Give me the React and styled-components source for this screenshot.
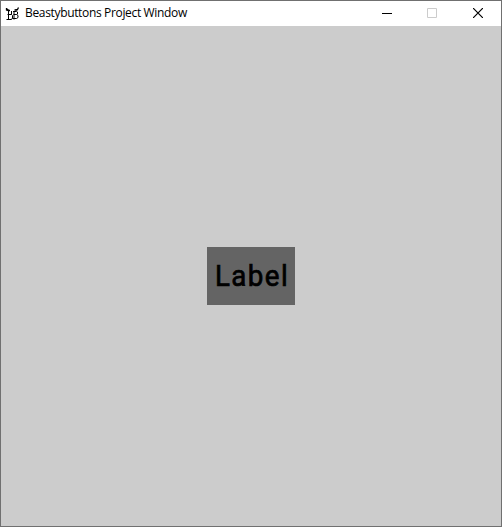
import React from "react";
import styled, { createGlobalStyle } from "styled-components";

const GlobalStyle = createGlobalStyle`
  * { box-sizing: border-box; }
  body { margin: 0; }
`;

const Window = styled.div`
  display: flex;
  flex-direction: column;
  width: 502px;
  height: 527px;
  border: 1px solid #707070;
  background: #cccccc;
  overflow: hidden;
`;

const TitleBar = styled.header`
  display: flex;
  align-items: flex-start;
  height: 25px;
  flex: none;
  padding-left: 4px;
  background: #ffffff;
`;

const AppIcon = styled.svg`
  width: 16px;
  height: 16px;
  flex: none;
  margin-top: 4px;
`;

const Title = styled.span`
  flex: 1;
  margin-left: 4px;
  font: 12px/24px "Open Sans", "Noto Sans", sans-serif;
  letter-spacing: -0.34px;
  color: #000000;
  white-space: nowrap;
`;

const ControlButton = styled.button`
  display: flex;
  align-items: center;
  justify-content: center;
  width: ${({ $wide }) => ($wide ? "47px" : "45px")};
  height: 24px;
  padding: 0;
  border: 0;
  background: transparent;
  color: ${({ $muted }) => ($muted ? "#cccccc" : "#000000")};
`;

const Glyph = styled.svg`
  width: 10px;
  height: 10px;
  fill: none;
  stroke: currentColor;
`;

const Controls = styled.div`
  display: flex;
`;

const Canvas = styled.main`
  flex: 1;
  display: flex;
  align-items: center;
  justify-content: center;
`;

const LabelButton = styled.button`
  display: flex;
  align-items: center;
  justify-content: center;
  width: 88px;
  height: 58px;
  padding: 0;
  border: 0;
  background: #646464;
  color: #000000;
`;

const LabelText = styled.span`
  font: 400 30px/58px Roboto, sans-serif;
  letter-spacing: 1.5px;
  margin-left: 3px;
  -webkit-text-stroke: 0.7px #000000;
  transform: scaleX(0.925);
`;

export default function App() {
  return (
    <>
      <GlobalStyle />
      <Window>
        <TitleBar>
          <AppIcon viewBox="0 0 16 16" fill="none" stroke="#000">
            <path d="M1.5 3V5L3.5 5.5H5M2 4 4 5.5M13.5 2.5 12.5 4.5 10 5M9.5 5H12.5" strokeWidth="1.3" />
            <path d="M3.5 6V14M1.5 14.5H6.5L7.5 13V10.5L6.5 9.5H2.5M6.5 6V9.5M9 6V14.5M8 6.5H11.5L12.5 7V9L11.5 9.5H8.5M11.5 9.5 13 10.5V12.5L11.5 13.5H7.5" strokeWidth="1" />
          </AppIcon>
          <Title>Beastybuttons Project Window</Title>
          <Controls>
            <ControlButton aria-label="Minimize">
              <Glyph viewBox="0 0 10 10"><path d="M0 5.5H10" /></Glyph>
            </ControlButton>
            <ControlButton aria-label="Maximize" $muted disabled>
              <Glyph viewBox="0 0 10 10"><path d="M.5.5h9v9h-9z" /></Glyph>
            </ControlButton>
            <ControlButton aria-label="Close" $wide>
              <Glyph viewBox="0 0 10 10"><path d="M0 0 10 10M10 0 0 10" strokeWidth="1.2" /></Glyph>
            </ControlButton>
          </Controls>
        </TitleBar>
        <Canvas>
          <LabelButton><LabelText>Label</LabelText></LabelButton>
        </Canvas>
      </Window>
    </>
  );
}
